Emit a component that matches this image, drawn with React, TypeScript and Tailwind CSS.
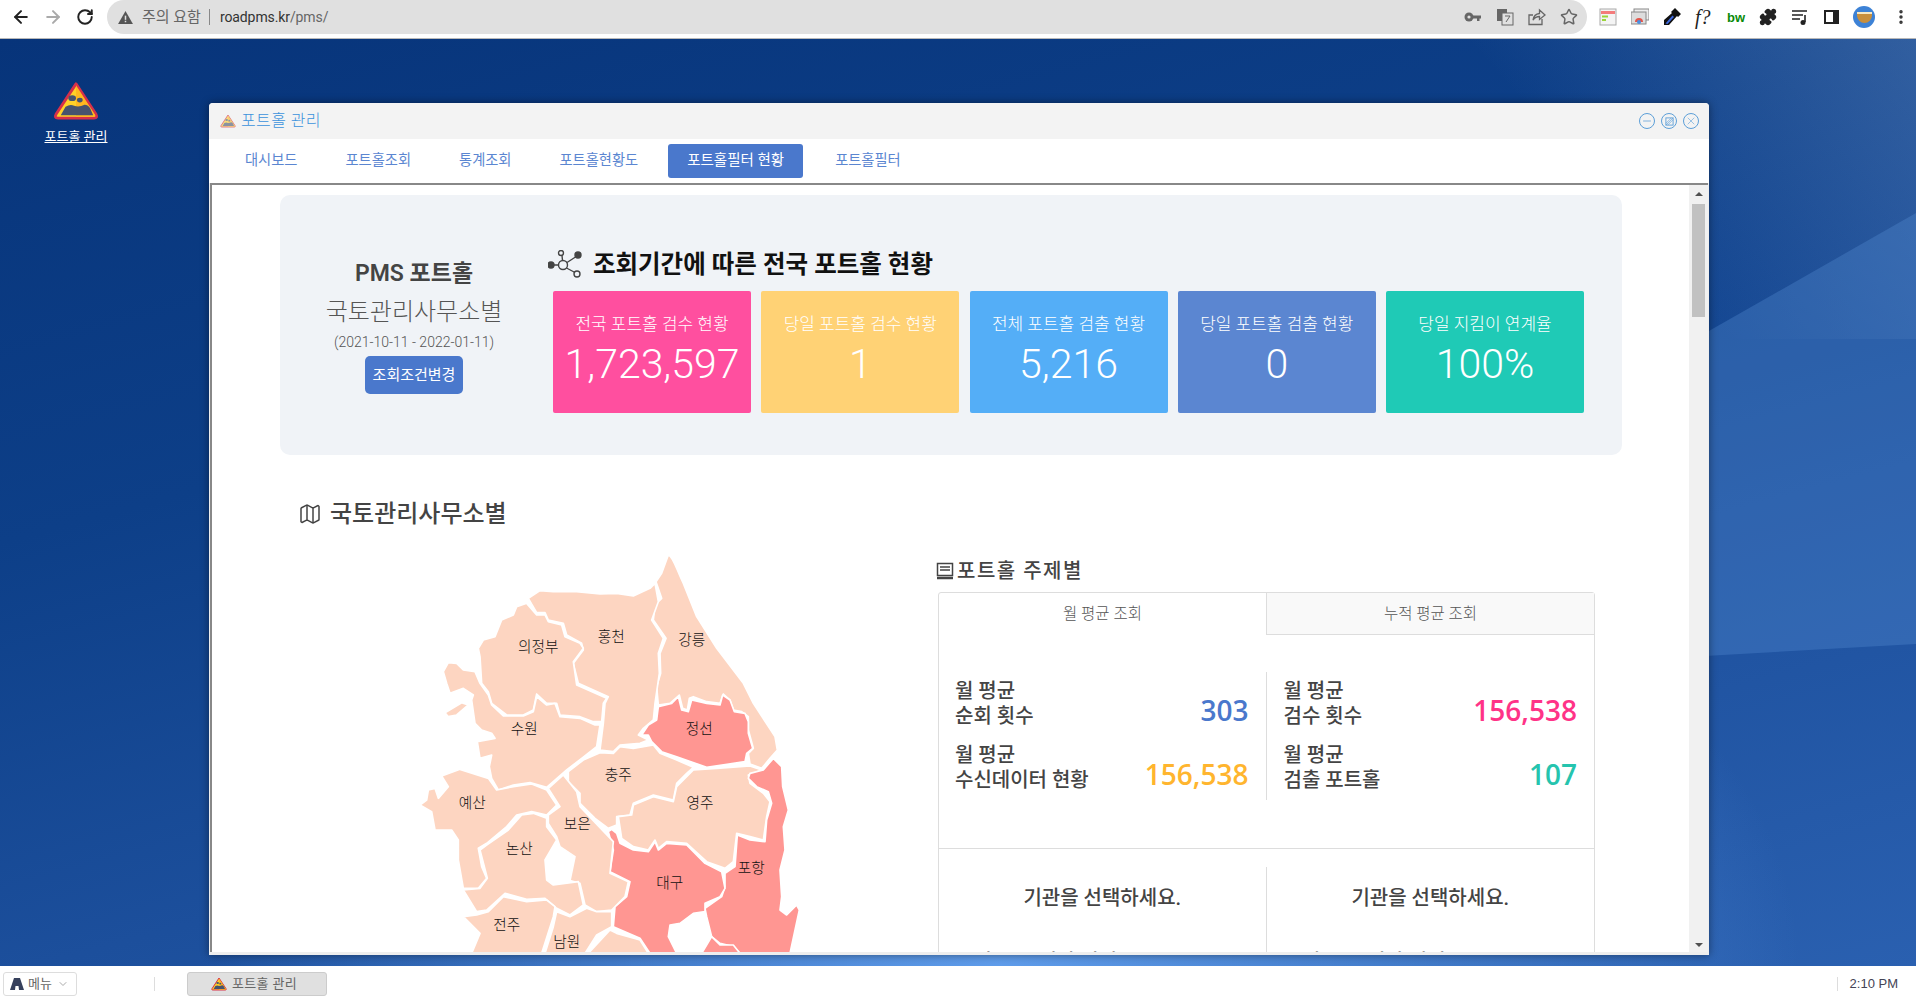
import { ArrowLeft, ArrowRight, RotateCw, Star, Puzzle, EllipsisVertical, ChevronDown, Map as MapIcon, Minus, X } from 'lucide-react';

const tabs = ['대시보드', '포트홀조회', '통계조회', '포트홀현황도'];

const cards = [
    { title: '전국 포트홀 검수 현황', value: '1,723,597', color: 'bg-[#ff4f9f]' },
    { title: '당일 포트홀 검수 현황', value: '1', color: 'bg-[#ffd275]' },
    { title: '전체 포트홀 검출 현황', value: '5,216', color: 'bg-[#54aef7]' },
    { title: '당일 포트홀 검출 현황', value: '0', color: 'bg-[#5b86d1]' },
    { title: '당일 지킴이 연계율', value: '100%', color: 'bg-[#1fcab6]' },
];

const PALE = '#fdd5c1';
const RED = '#ff9692';

// map regions, traced in 3x coordinates of the crop
const regions: { d: string; fill: string }[] = [
    { fill: PALE, d: 'M805 45 C820 50 830 90 850 130 L890 230 L950 325 L1030 430 L1060 490 L1125 590 L1132 630 L1110 655 L1085 685 L1050 672 L1045 640 L1060 625 L1045 570 L1045 530 L1025 515 L1000 510 L990 480 L970 462 L960 490 L920 485 L880 470 L868 475 L862 510 L848 505 L838 465 L810 490 L775 495 L770 440 L782 400 L780 340 L798 295 L760 240 L765 195 L785 175 L768 125 L785 100 Z' },
    { fill: RED, d: 'M775 500 L815 490 L835 470 L845 510 L865 515 L875 480 L920 490 L960 495 L968 465 L990 480 L1003 515 L1035 520 L1045 545 L1045 580 L1058 625 L1040 640 L1035 665 L920 682 L830 650 L785 635 L755 605 L745 585 L725 585 L745 555 L770 540 Z' },
    { fill: PALE, d: 'M385 175 L420 152 L460 155 L530 155 L600 162 L650 160 L700 168 L750 145 L765 130 L775 185 L755 240 L790 295 L775 340 L778 400 L765 490 L760 540 L730 565 L715 585 L745 600 L720 610 L660 615 L640 635 L600 630 L610 550 L615 490 L625 470 L535 430 L520 370 L550 330 L545 310 L500 285 L490 250 L445 240 L435 218 L410 218 Z' },
    { fill: PALE, d: 'M380 190 L410 225 L435 225 L445 245 L485 255 L495 290 L540 310 L550 325 L520 365 L530 435 L620 475 L610 490 L605 545 L580 545 L540 530 L480 525 L470 490 L440 490 L410 462 L400 510 L370 525 L320 525 L275 490 L265 455 L245 430 L240 350 L235 325 L250 300 L285 290 L305 240 L340 225 L350 200 Z' },
    { fill: PALE, d: 'M130 395 L145 368 L170 370 L190 390 L225 395 L240 430 L265 465 L275 495 L310 528 L370 528 L400 515 L410 470 L440 495 L465 490 L480 530 L540 535 L585 555 L600 555 L590 620 L545 655 L500 690 L440 742 L390 728 L340 735 L295 750 L275 715 L268 680 L275 645 L240 655 L232 605 L285 595 L275 580 L245 570 L225 550 L215 480 L220 465 L190 445 L150 460 L140 430 Z M135 518 L185 488 L205 495 L170 525 L145 530 Z' },
    { fill: PALE, d: 'M505 695 L550 660 L600 638 L640 640 L660 620 L700 625 L760 615 L780 640 L830 660 L880 682 L860 700 L830 730 L820 780 L760 765 L700 790 L690 825 L650 830 L650 855 L625 865 L585 835 L540 790 L540 760 L505 725 Z' },
    { fill: PALE, d: 'M880 690 L950 685 L1050 678 L1085 690 L1045 705 L1050 730 L1090 760 L1110 785 L1100 830 L1090 900 L1050 890 L1010 880 L1000 965 L975 985 L920 965 L860 910 L800 905 L775 925 L765 900 L745 930 L700 920 L665 895 L655 830 L695 825 L700 795 L760 770 L820 785 L830 740 Z' },
    { fill: RED, d: 'M1120 655 L1145 680 L1148 740 L1165 810 L1150 860 L1155 930 L1140 990 L1145 1070 L1140 1110 L1160 1125 L1190 1095 L1198 1110 L1170 1240 L1020 1240 L1000 1220 L960 1210 L935 1190 L920 1130 L915 1105 L965 1070 L975 1040 L975 1000 L1005 980 L1012 885 L1050 900 L1095 905 L1100 840 L1115 790 L1105 755 L1070 740 L1045 715 L1050 700 L1090 690 Z' },
    { fill: RED, d: 'M635 868 L650 880 L660 910 L700 930 L745 935 L765 905 L775 930 L800 910 L860 915 L915 970 L965 995 L975 1045 L960 1070 L915 1090 L915 1115 L880 1120 L840 1150 L810 1155 L805 1190 L830 1240 L750 1240 L720 1195 L640 1160 L645 1100 L680 1070 L690 1025 L630 995 L640 930 L625 875 Z' },
    { fill: RED, d: 'M905 1240 L935 1190 L960 1215 L1000 1215 L1020 1240 Z' },
    { fill: PALE, d: 'M490 705 L530 755 L540 800 L640 905 L630 1000 L685 1025 L675 1070 L635 1110 L590 1115 L555 1095 L540 1030 L510 1022 L525 950 L480 920 L470 890 L445 850 L445 825 L480 800 L445 745 Z' },
    { fill: PALE, d: 'M60 795 L80 780 L85 750 L105 745 L115 775 L145 740 L125 708 L180 688 L265 715 L290 750 L340 740 L395 732 L440 750 L470 795 L440 825 L395 815 L350 825 L320 860 L260 910 L235 925 L245 980 L260 1015 L235 1045 L190 1045 L175 960 L175 900 L155 870 L105 870 L95 815 Z' },
    { fill: PALE, d: 'M440 835 L440 860 L470 900 L435 960 L440 1020 L460 1035 L535 1025 L550 1095 L510 1125 L470 1105 L435 1075 L380 1078 L315 1060 L260 1110 L230 1115 L190 1050 L240 1045 L262 1015 L240 930 L260 915 L325 870 L365 825 L400 820 Z' },
    { fill: PALE, d: 'M190 1130 L230 1125 L265 1115 L310 1070 L380 1085 L440 1080 L465 1100 L460 1130 L425 1240 L215 1240 L240 1180 Z' },
    { fill: PALE, d: 'M470 1115 L510 1130 L560 1105 L590 1115 L635 1115 L635 1160 L590 1185 L555 1240 L435 1240 L460 1160 Z' },
    { fill: PALE, d: 'M565 1240 L630 1170 L650 1180 L720 1200 L745 1240 Z' },
];

const mapLabels = [
    { x: 415, y: 320, t: '의정부' },
    { x: 634, y: 290, t: '홍천' },
    { x: 875, y: 298, t: '강릉' },
    { x: 898, y: 566, t: '정선' },
    { x: 373, y: 566, t: '수원' },
    { x: 655, y: 703, t: '충주' },
    { x: 217, y: 788, t: '예산' },
    { x: 900, y: 788, t: '영주' },
    { x: 532, y: 850, t: '보은' },
    { x: 358, y: 926, t: '논산' },
    { x: 1054, y: 982, t: '포항' },
    { x: 809, y: 1027, t: '대구' },
    { x: 320, y: 1153, t: '전주' },
    { x: 500, y: 1205, t: '남원' },
];

function PotholeIcon({ className }: { className: string }) {
    return (
        <svg viewBox="0 0 48 42" className={className}>
            <path d="M24 3 L45 35 Q47 39 43 39 L5 39 Q1 39 3 35 Z" fill="#ffd028" stroke="#d6304a" strokeWidth="3" strokeLinejoin="round" />
            <path d="M24 4.500 L44 35.500 Q45 37.500 43 37.500 L24 37.500 Z" fill="#ffb81f" />
            <path d="M8 36 L13 27 Q18 24 22 26 Q27 28 33 25 Q37 25 39 29 L42 36 Z" fill="#46536e" />
            <ellipse cx="20" cy="18" rx="4" ry="3" fill="#46536e" />
            <ellipse cx="28" cy="20" rx="3" ry="2.500" fill="#46536e" />
        </svg>
    );
}

function NetworkIcon() {
    return (
        <svg viewBox="0 0 34 28" className="w-[34px] h-[28px]" fill="none" stroke="#444" strokeWidth="1.400">
            <circle cx="3" cy="15" r="3" fill="#444" />
            <circle cx="15" cy="15" r="4.500" />
            <circle cx="13" cy="3" r="2.500" />
            <circle cx="30" cy="5" r="3" fill="#444" />
            <circle cx="29" cy="24" r="3" />
            <path d="M6 15 H10.500 M14 5.500 L14.500 10.500 M19 12.500 L27.500 7 M18.500 18 L27 22.500" />
        </svg>
    );
}

function Stat({ label, value, color }: { label: string; value: string; color: string }) {
    return (
        <div className="h-[64px] flex justify-between items-center">
            <div className="text-[20px] leading-[25px] font-medium text-[#444] whitespace-pre-line">{label}</div>
            <div className={`text-[28px] leading-[36px] mt-[12px] font-semibold font-['Open_Sans'] ${color}`}>{value}</div>
        </div>
    );
}

function WindowButton({ children }: { children: React.ReactNode }) {
    return <div className="w-4 h-4 rounded-full border border-[#5c9fd8] text-[#5c9fd8] flex items-center justify-center">{children}</div>;
}

export default function App() {
    return (
        <div className="w-[1916px] h-[1001px] flex flex-col overflow-hidden bg-white font-['Roboto','Noto_Sans_CJK_KR',sans-serif]">
            {/* Browser toolbar */}
            <header className="h-[39px] shrink-0 flex border-b border-[#b8b8b8] bg-white">
                <div className="w-[107px] h-[34px] flex items-center pl-[11px] gap-[12px]">
                    <ArrowLeft className="w-5 h-5 text-[#222]" strokeWidth={2.4} />
                    <ArrowRight className="w-5 h-5 text-[#aaa]" strokeWidth={2.4} />
                    <RotateCw className="w-[18px] h-[18px] ml-[1px] text-[#222]" strokeWidth={2.6} />
                </div>
                <div className="w-[1480px] h-[34px] rounded-full bg-[#e0e0e0] flex items-center pl-[11px] pr-[9px]">
                    <svg viewBox="0 0 16 14" className="w-[15px] h-[13px]"><path d="M8 0 L16 14 H0 Z" fill="#555" /><rect x="7.200" y="5" width="1.600" height="4.500" fill="#e0e0e0" /><rect x="7.200" y="10.500" width="1.600" height="1.600" fill="#e0e0e0" /></svg>
                    <span className="ml-[9px] text-[15px] text-[#666]">주의 요함</span>
                    <span className="ml-[8px] w-px h-[16px] bg-[#888]" />
                    <span className="ml-[10px] text-[14px] tracking-[-0.1px] text-[#333]">roadpms.kr<span className="text-[#666]">/pms/</span></span>
                    <div className="ml-auto flex items-center gap-[14px] text-[#666]">
                        <svg viewBox="0 0 18 18" className="w-[18px] h-[18px]" fill="#666"><circle cx="5" cy="9" r="4.500" /><circle cx="5" cy="9" r="1.600" fill="#e0e0e0" /><path d="M8 7.500 H17 V10.500 H15.500 V13 H13 V10.500 H8 Z" /></svg>
                        <svg viewBox="0 0 18 18" className="w-[18px] h-[18px]"><rect x="1" y="1" width="10" height="12" fill="#666" /><rect x="6" y="5" width="11" height="12" fill="#e0e0e0" stroke="#666" /><path d="M9 8 H14 L10 14" fill="none" stroke="#666" /></svg>
                        <svg viewBox="0 0 18 18" className="w-[18px] h-[18px]" fill="none" stroke="#666" strokeWidth="1.300"><path d="M5 7 H1 V16.500 H14 V11" /><path d="M5 12 Q6 6 11.500 5.500 V2 L17 7 L11.500 11.500 V8.500 Q7.500 8.500 5 12 Z" /></svg>
                        <Star className="w-[18px] h-[18px]" strokeWidth={2} />
                    </div>
                </div>
                <div className="flex-1 h-[34px] flex items-center pl-[12px] gap-[14px]">
                    <svg viewBox="0 0 18 18" className="w-[18px] h-[18px]"><rect x="1" y="1" width="16" height="16" fill="#f4f4f4" stroke="#aaa" /><rect x="2" y="3" width="14" height="3" fill="#f47c7c" /><rect x="3" y="7.500" width="6" height="2" fill="#9bd53a" /><rect x="3" y="11" width="4" height="2" fill="#9bd53a" /></svg>
                    <svg viewBox="0 0 18 18" className="w-[18px] h-[18px]"><rect x="3" y="1" width="15" height="11" fill="#eee" stroke="#888" /><rect x="0" y="4" width="15" height="12" fill="#ddd" stroke="#888" /><path d="M4 14 A4 4 0 0 1 12 14 Z" fill="#e2574c" /><circle cx="8" cy="14" r="2" fill="#4a90e2" /></svg>
                    <svg viewBox="0 0 18 18" className="w-[18px] h-[18px]"><path d="M12 0 L18 6 L15 9 L14 8 L6 17 L1 17 L1 12 L9 5 L8 4 Z" fill="#111" /><path d="M2.500 15.500 L9.500 7.500 L11 9 L4.500 16 Z" fill="#3f6ae0" /></svg>
                    <span className="w-[18px] text-[20px] leading-none italic font-['Liberation_Serif'] text-[#222]">f?</span>
                    <span className="w-[18px] text-[13px] leading-none font-bold font-['Liberation_Sans'] text-[#0a8a0a]">bw</span>
                    <Puzzle className="w-[18px] h-[18px] text-[#222]" fill="#222" />
                    <svg viewBox="0 0 18 18" className="w-[18px] h-[18px]"><path d="M1 3 H16 M1 7 H12 M1 11 H9" stroke="#222" strokeWidth="1.600" /><path d="M14 7 V14" stroke="#222" strokeWidth="1.600" /><circle cx="12" cy="14.500" r="2.500" fill="#222" /></svg>
                    <svg viewBox="0 0 18 18" className="w-[18px] h-[18px]"><rect x="1" y="2" width="15" height="14" fill="#222" /><rect x="3" y="4" width="7" height="10" fill="#fff" /></svg>
                    <span className="w-[22px] h-[22px] -ml-[2px] rounded-full bg-[#3d82d6] flex items-center justify-center"><span className="w-[15px] h-[11px] rounded-b-full bg-[#c88f3d] border-t-2 border-[#f6e8c4]" /></span>
                    <EllipsisVertical className="w-[18px] h-[18px] ml-[3px] text-[#333]" strokeWidth={2.6} />
                </div>
            </header>

            {/* Desktop */}
            <main className="relative flex-1 overflow-hidden bg-[linear-gradient(165deg,#07347a_0%,#0d3f88_35%,#1c4f9c_65%,#2a60b0_100%)]">
                <svg className="absolute inset-0 w-full h-full" viewBox="0 0 1916 927" preserveAspectRatio="none">
                    <defs>
                        <linearGradient id="topLight" gradientUnits="userSpaceOnUse" x1="1640" y1="200" x2="1916" y2="-40">
                            <stop offset="0" stopColor="#8fb0dc" stopOpacity="0" />
                            <stop offset="1" stopColor="#8fb0dc" stopOpacity="0.3" />
                        </linearGradient>
                        <radialGradient id="bottomGlow" gradientUnits="userSpaceOnUse" cx="0" cy="0" r="1" gradientTransform="translate(1000 927) scale(800 500)">
                            <stop offset="0" stopColor="#62a0ee" stopOpacity="0.95" />
                            <stop offset="1" stopColor="#62a0ee" stopOpacity="0" />
                        </radialGradient>
                    </defs>
                    <rect width="1916" height="927" fill="url(#bottomGlow)" />
                    <rect width="1916" height="300" fill="url(#topLight)" />
                    <path d="M1300 525 L1916 174 V605 L1300 640 Z" fill="#5d96dc" opacity="0.3" />
                </svg>

                <div className="absolute left-[40px] top-[42px] w-[72px] flex flex-col items-center">
                    <PotholeIcon className="w-[46px] h-[40px]" />
                    <span className="mt-[7px] text-[13px] leading-[18px] text-white underline whitespace-nowrap">포트홀 관리</span>
                </div>

                {/* Window */}
                <section className="absolute left-[209px] top-[64px] w-[1500px] h-[852px] rounded-t-[4px] bg-[#eeeeee] shadow-[0_0_8px_rgba(0,0,0,0.45)] flex flex-col overflow-hidden">
                    <div className="h-[36px] shrink-0 bg-[#f3f3f3] flex items-center pl-[11px] pr-[10px]">
                        <PotholeIcon className="w-[16px] h-[14px] opacity-60" />
                        <span className="ml-[5px] text-[16px] tracking-[0.4px] text-[#3b92dc] font-light">포트홀 관리</span>
                        <div className="ml-auto flex gap-[6px]">
                            <WindowButton><Minus className="w-3 h-3" strokeWidth={1.5} /></WindowButton>
                            <WindowButton><svg viewBox="0 0 10 10" className="w-[9px] h-[9px]" fill="none" stroke="currentColor"><rect x="1" y="1" width="8" height="8" /><path d="M1 9 L9 1 M3 9 L9 3 M1 7 L7 1" strokeWidth="0.700" /></svg></WindowButton>
                            <WindowButton><X className="w-3 h-3" strokeWidth={1.2} /></WindowButton>
                        </div>
                    </div>
                    <nav className="h-[44px] shrink-0 bg-white flex items-center pl-[12px] text-[14.250px] text-[#5b86d1]">
                        {tabs.map(tab => (
                            <span key={tab} className="px-6">{tab}</span>
                        ))}
                        <span className="ml-[6px] h-[34px] w-[135px] rounded-[3px] bg-[#4a78cc] text-white text-[14.500px] flex items-center justify-center">포트홀필터 현황</span>
                        <span className="ml-[8px] px-6">포트홀필터</span>
                    </nav>

                    <div className="h-[769px] ml-[1px] mr-[1px] shrink-0 bg-white border-l-2 border-t-2 border-[#888] flex overflow-hidden">
                        <div className="flex-1 overflow-hidden">
                            <div className="mt-[10px] ml-[68px] w-[1342px] h-[260px] rounded-[10px] bg-[#f0f3f7] flex">
                                <div className="w-[268px] pt-[62px] flex flex-col items-center">
                                    <div className="text-[23px] leading-[34px] font-semibold text-[#444]">PMS 포트홀</div>
                                    <div className="mt-[3px] text-[24px] leading-[36px] font-light text-[#555]">국토관리사무소별</div>
                                    <div className="mt-[2px] text-[14px] leading-[20px] font-light text-[#555]">(2021-10-11 - 2022-01-11)</div>
                                    <div className="mt-[4px] w-[98px] h-[38px] rounded-[5px] bg-[#4a78cc] text-white text-[15px] flex items-center justify-center">조회조건변경</div>
                                </div>
                                <div className="flex-1 pt-[55px]">
                                    <div className="flex items-center h-[28px]">
                                        <NetworkIcon />
                                        <h2 className="ml-[11px] mt-[2px] text-[24.500px] font-semibold text-[#111]">조회기간에 따른 전국 포트홀 현황</h2>
                                    </div>
                                    <div className="mt-[13px] ml-[5px] flex gap-[10.250px]">
                                        {cards.map(card => (
                                            <div key={card.title} className={`w-[198px] h-[122px] rounded-[2px] text-white text-center flex flex-col ${card.color}`}>
                                                <div className="mt-[22px] text-[17px] leading-[22px] font-light">{card.title}</div>
                                                <div className="mt-[5px] text-[41px] leading-[48px] font-light">{card.value}</div>
                                            </div>
                                        ))}
                                    </div>
                                </div>
                            </div>

                            <div className="mt-[42px] ml-[86px] flex items-center h-[34px] text-[#444]">
                                <MapIcon className="w-[24px] h-[24px]" strokeWidth={1.5} />
                                <h2 className="ml-[8px] text-[24px] font-medium">국토관리사무소별</h2>
                            </div>

                            <div className="mt-[9px] flex">
                                <div className="ml-[188px] w-[420px] h-[420px] shrink-0">
                                    <svg viewBox="0 0 1260 1260" className="w-[420px] h-[420px]">
                                        {regions.map((r, i) => (
                                            <path key={i} d={r.d} fill={r.fill} stroke="#fff" strokeWidth="5" strokeLinejoin="round" />
                                        ))}
                                        {mapLabels.map(l => (
                                            <text key={l.t} x={l.x} y={l.y + 16} textAnchor="middle" fontSize="44" fontWeight="300" fill="#111">{l.t}</text>
                                        ))}
                                    </svg>
                                </div>
                                <div className="ml-[118px] w-[657px] pt-[17px]">
                                    <div className="flex items-center h-[28px] text-[#444]">
                                        <svg viewBox="0 0 18 18" className="w-[18px] h-[18px] -ml-[2px]" fill="none" stroke="#444" strokeWidth="1.500"><rect x="1.500" y="1.500" width="15" height="12" /><path d="M4 5 H14 M4 8 H14" /><path d="M1 16 H17" strokeWidth="2.500" /></svg>
                                        <h3 className="ml-[3px] text-[20px] tracking-[1.500px] font-medium">포트홀 주제별</h3>
                                    </div>
                                    <div className="mt-[7px] border border-[#ddd] rounded-t-[3px]">
                                        <div className="flex h-[42px] pt-[2px] text-[15.500px] font-light text-[#555]">
                                            <div className="w-[327px] flex items-center justify-center">월 평균 조회</div>
                                            <div className="flex-1 -mt-[2px] pt-[2px] bg-[#f9f9f9] border-l border-b border-[#ddd] flex items-center justify-center">누적 평균 조회</div>
                                        </div>
                                        <div className="pt-[37px] pb-[48px] grid grid-cols-2 border-b border-[#ddd]">
                                            <div className="pl-[16px] pr-[17px] border-r border-[#ddd]">
                                                <Stat label={'월 평균\n순회 횟수'} value="303" color="text-[#4a78cc]" />
                                                <Stat label={'월 평균\n수신데이터 현황'} value="156,538" color="text-[#ffb52e]" />
                                            </div>
                                            <div className="pl-[17px] pr-[17px]">
                                                <Stat label={'월 평균\n검수 횟수'} value="156,538" color="text-[#ff3387]" />
                                                <Stat label={'월 평균\n검출 포트홀'} value="107" color="text-[#25c4ae]" />
                                            </div>
                                        </div>
                                        <div className="pt-[18px] grid grid-cols-2">
                                            <div className="border-r border-[#ddd] text-center h-[120px]">
                                                <div className="pt-[19px] text-[20px] leading-[24px] font-medium text-[#444]">기관을 선택하세요.</div>
                                                <div className="mt-[40px] pl-[16px] text-left text-[20px] leading-[25px] font-medium text-[#444]">순회 도로 연장 길이</div>
                                            </div>
                                            <div className="text-center h-[120px]">
                                                <div className="pt-[19px] text-[20px] leading-[24px] font-medium text-[#444]">기관을 선택하세요.</div>
                                                <div className="mt-[40px] pl-[17px] text-left text-[20px] leading-[25px] font-medium text-[#444]">순회 도로 연장 길이</div>
                                            </div>
                                        </div>
                                    </div>
                                </div>
                            </div>
                        </div>
                        {/* scrollbar */}
                        <div className="w-[19px] shrink-0 bg-[#f1f1f1] flex flex-col items-center">
                            <div className="mt-[7px] w-0 h-0 border-x-[4px] border-x-transparent border-b-[4px] border-b-[#505050]" />
                            <div className="mt-[8px] w-[13px] h-[113px] bg-[#c1c1c1]" />
                            <div className="mt-auto mb-[5px] w-0 h-0 border-x-[4px] border-x-transparent border-t-[4px] border-t-[#505050]" />
                        </div>
                    </div>
                </section>
            </main>

            {/* Taskbar */}
            <footer className="h-[35px] shrink-0 bg-white flex items-center pl-[3px] pr-[18px]">
                <div className="w-[74px] h-[24px] rounded-[3px] border border-[#ddd] flex items-center pl-[6px] text-[13px] text-[#666]">
                    <svg viewBox="0 0 14 12" className="w-[14px] h-[12px]"><path d="M4 0 H10 L14 12 H9 L8.500 8 H5.500 L5 12 H0 Z" fill="#36405c" /></svg>
                    <span className="ml-[4px]">메뉴</span>
                    <ChevronDown className="ml-[5px] w-[12px] h-[12px] text-[#aaa]" />
                </div>
                <span className="ml-[77px] w-px h-[14px] bg-[#ddd]" />
                <div className="ml-[32px] w-[140px] h-[24px] rounded-[3px] border border-[#ccc] bg-[#e0e0e0] flex items-center justify-center gap-[5px] pr-[6px] text-[13px] tracking-[0.3px] text-[#666]">
                    <PotholeIcon className="w-[16px] h-[14px]" />
                    포트홀 관리
                </div>
                <span className="ml-auto w-px h-[14px] bg-[#ddd]" />
                <span className="ml-[12px] text-[13px] font-['Liberation_Sans'] text-[#445]">2:10 PM</span>
            </footer>
        </div>
    );
}
